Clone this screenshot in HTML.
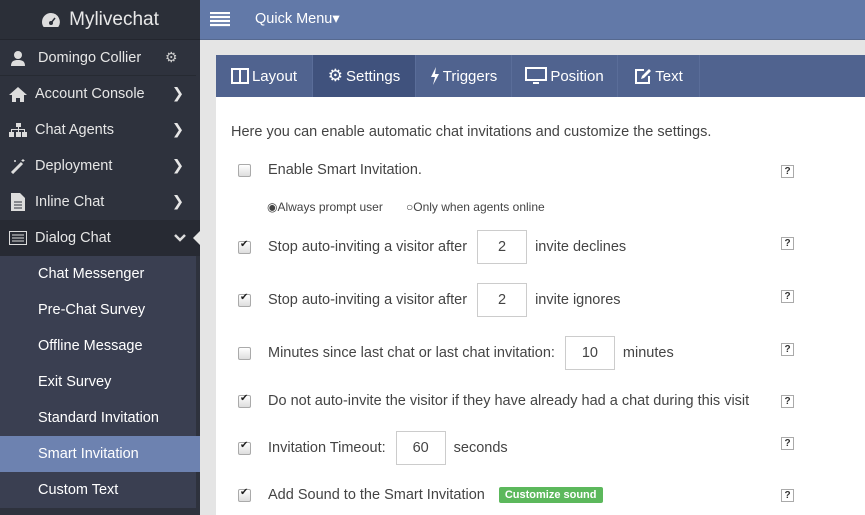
<!DOCTYPE html>
<html><head><style>
*{margin:0;padding:0;box-sizing:border-box}
body{width:865px;height:515px;overflow:hidden;font-family:"Liberation Sans",sans-serif;background:#e5e5e5;position:relative}
#side{position:absolute;left:0;top:0;width:200px;height:515px;background:#2e323d}
#logo{height:40px;background:#2b2f38;color:#e8e8e8;font-size:19px;display:flex;align-items:center;justify-content:center;border-bottom:1px solid #23262e}
.it{position:absolute;left:0;width:196px;height:36px;display:flex;align-items:center;color:#e6e6e6;font-size:14.5px}
.it .ic{width:18px;margin-left:9px;margin-right:8px;display:flex;justify-content:center}
.it .ar{position:absolute;right:12px;top:10px}
.sub{background:#3a3f51;color:#fff;padding-left:38px;font-size:14.5px}
#top{position:absolute;left:200px;top:0;width:665px;height:40px;background:#6279a8;border-bottom:1px solid #56698f}
#panel{position:absolute;left:216px;top:55px;width:649px;height:460px;background:#fff}
#tabs{height:42px;background:#50638f;display:flex}
.tab{height:42px;display:flex;align-items:center;justify-content:center;color:#fff;font-size:15px;border-right:1px solid #5a6d99;gap:3px}
.row{position:absolute;left:0;width:649px;color:#444;font-size:14.5px;display:flex;align-items:center}
.cb{position:absolute;left:22px;width:13px;height:13px;border:1px solid #aaa;border-radius:2px;background:linear-gradient(#fff,#ddd)}
.cb.on::after{content:"✔";position:absolute;left:1px;top:-3px;font-size:10px;color:#222}
.lbl{position:absolute;left:52px;display:flex;align-items:center;white-space:nowrap}
.inp{display:inline-block;width:50px;height:34px;border:1px solid #ccc;text-align:center;line-height:32px;margin:0 8px 0 10px}
.q{position:absolute;left:565px;width:13px;height:13px;border:1px solid #aaa;font-size:10px;line-height:11px;text-align:center;color:#333;font-weight:bold}
</style></head><body>
<div id="side">
<div id="logo"><svg width="20" height="16" viewBox="0 0 20 16" style="margin-right:8px"><path d="M10 1a9 9 0 0 0-9 9c0 2 .6 3.7 1.7 5h14.6A9 9 0 0 0 10 1z" fill="#ddd"/><circle cx="10" cy="11" r="2" fill="#2b2f38"/><path d="M10 11l4-5" stroke="#2b2f38" stroke-width="1.5"/></svg>Mylivechat</div>
<div class="it" style="top:40px;border-bottom:1px solid #262a32"><span class="ic"><svg width="16" height="16"><circle cx="8" cy="5" r="4" fill="#ddd"/><path d="M1 16c0-5 3-6 7-6s7 1 7 6z" fill="#ddd"/></svg></span><span style="margin-left:3px">Domingo Collier</span><span style="position:absolute;left:165px;color:#ccc;font-size:14px">⚙</span></div>
<div class="it" style="top:76px"><span class="ic"><svg width="18" height="16"><path d="M9 1L0 9h3v7h4v-4h4v4h4V9h3z" fill="#ddd"/></svg></span>Account Console<span class="ar">❯</span></div>
<div class="it" style="top:112px"><span class="ic"><svg width="18" height="14"><rect x="7" y="0" width="5" height="4" fill="#ddd"/><rect x="0" y="9" width="5" height="5" fill="#ddd"/><rect x="7" y="9" width="5" height="5" fill="#ddd"/><rect x="13" y="9" width="5" height="5" fill="#ddd"/><path d="M9.5 4v5M2.5 9V6.5h13V9" stroke="#ddd" fill="none"/></svg></span>Chat Agents<span class="ar">❯</span></div>
<div class="it" style="top:148px"><span class="ic"><svg width="16" height="16"><path d="M2 15L12 5" stroke="#ddd" stroke-width="3"/><path d="M13 1v3M11.5 2.5h3M5 2v2M4 3h2" stroke="#ddd"/></svg></span>Deployment<span class="ar">❯</span></div>
<div class="it" style="top:184px"><span class="ic"><svg width="14" height="18"><path d="M0 0h9l5 5v13H0z" fill="#ddd"/><path d="M3 9h8M3 12h8M3 15h8" stroke="#2e323d"/></svg></span>Inline Chat<span class="ar">❯</span></div>
<div class="it" style="top:220px;background:#272a33;width:200px"><span class="ic"><svg width="18" height="14"><rect x=".5" y=".5" width="17" height="13" fill="none" stroke="#ddd"/><path d="M3 4h12M3 7h12M3 10h12" stroke="#ddd"/></svg></span>Dialog Chat<svg style="position:absolute;right:14px;top:14px" width="12" height="8"><path d="M1 1l5 5 5-5" stroke="#ddd" stroke-width="2.5" fill="none"/></svg><span style="position:absolute;right:0;top:11px;width:0;height:0;border:7px solid transparent;border-right-color:#e5e5e5;border-left:0"></span></div>
<div class="it sub" style="top:256px">Chat Messenger</div>
<div class="it sub" style="top:292px">Pre-Chat Survey</div>
<div class="it sub" style="top:328px">Offline Message</div>
<div class="it sub" style="top:364px">Exit Survey</div>
<div class="it sub" style="top:400px">Standard Invitation</div>
<div class="it sub" style="top:436px;background:#6d82b0;width:200px">Smart Invitation</div>
<div class="it sub" style="top:472px">Custom Text</div>
</div>
<div id="top"><svg style="position:absolute;left:10px;top:12px" width="20" height="15"><path d="M0 1h20M0 5h20M0 9h20M0 13h20" stroke="#fff" stroke-width="2.2"/></svg><span style="position:absolute;left:55px;top:11px;color:#fff;font-size:14.5px">Quick Menu▾</span></div>
<div id="panel">
<div id="tabs">
<div class="tab" style="width:97px"><svg width="18" height="16"><rect x="1" y="1" width="16" height="14" fill="none" stroke="#fff" stroke-width="2"/><path d="M9 1v14" stroke="#fff" stroke-width="2"/></svg>Layout</div>
<div class="tab" style="width:103px;background:#40527d"><span style="font-size:17px">⚙</span>Settings</div>
<div class="tab" style="width:96px"><svg width="10" height="18"><path d="M6 0L1 10h4l-2 8 6-11H5z" fill="#fff"/></svg>Triggers</div>
<div class="tab" style="width:106px"><svg width="22" height="18"><rect x="1" y="1" width="20" height="12" fill="none" stroke="#fff" stroke-width="2"/><path d="M8 15h6v2H8z" fill="#fff"/></svg>Position</div>
<div class="tab" style="width:82px"><svg width="18" height="16"><path d="M10 2H2v13h13V8" fill="none" stroke="#fff" stroke-width="2"/><path d="M7 11l1-3 7-7 2 2-7 7z" fill="#fff"/></svg>Text</div>
</div>
<div class="row" style="top:67px;height:20px"><span style="position:absolute;left:15px">Here you can enable automatic chat invitations and customize the settings.</span></div>
<div class="row" style="top:105px;height:20px"><span class="cb"></span><span class="lbl">Enable Smart Invitation.</span><span class="q" style="top:5px">?</span></div>
<div class="row" style="top:144px;height:16px;font-size:12px"><span style="position:absolute;left:51px">◉Always prompt user</span><span style="position:absolute;left:190px">○Only when agents online</span></div>
<div class="row" style="top:175px;height:34px"><span class="cb on"></span><span class="lbl">Stop auto-inviting a visitor after <span class="inp">2</span> invite declines</span><span class="q" style="top:7px">?</span></div>
<div class="row" style="top:228px;height:34px"><span class="cb on"></span><span class="lbl">Stop auto-inviting a visitor after <span class="inp">2</span> invite ignores</span><span class="q" style="top:7px">?</span></div>
<div class="row" style="top:281px;height:34px"><span class="cb"></span><span class="lbl">Minutes since last chat or last chat invitation: <span class="inp">10</span>minutes</span><span class="q" style="top:7px">?</span></div>
<div class="row" style="top:336px;height:20px"><span class="cb on"></span><span class="lbl">Do not auto-invite the visitor if they have already had a chat during this visit</span><span class="q" style="top:4px">?</span></div>
<div class="row" style="top:376px;height:34px"><span class="cb on"></span><span class="lbl">Invitation Timeout: <span class="inp">60</span>seconds</span><span class="q" style="top:6px">?</span></div>
<div class="row" style="top:430px;height:20px"><span class="cb on"></span><span class="lbl">Add Sound to the Smart Invitation<span style="margin-left:14px;background:#5cb85c;color:#fff;font-size:11px;font-weight:bold;padding:2px 6px;border-radius:2px">Customize sound</span></span><span class="q" style="top:4px">?</span></div>
</div>
</body></html>
